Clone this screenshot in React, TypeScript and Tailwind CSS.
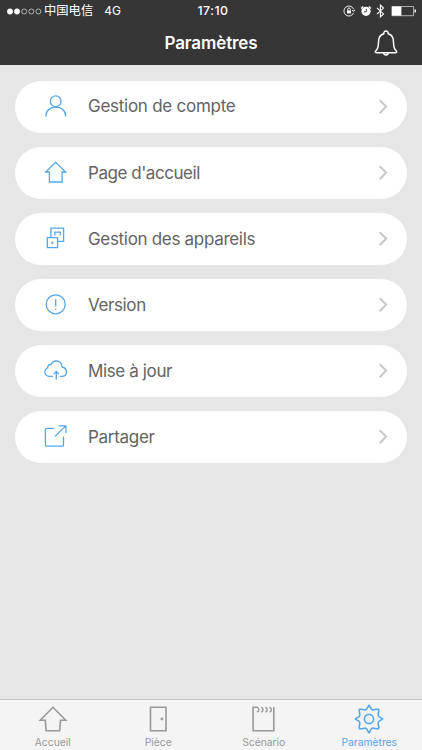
import { useState } from 'react'
import type { ReactNode } from 'react'

type Tab = 'home' | 'room' | 'scene' | 'settings'

const ROWS: { label: string; tracking: string; icon: ReactNode }[] = [
  {
    label: 'Gestion de compte',
    tracking: 'tracking-[-0.26px]',
    icon: (
      <>
        <circle cx="11.7" cy="6.3" r="5.4" />
        <path d="M2 21.5v-1c0-5 4.2-8.3 9.7-8.3s9.9 3.3 9.9 8.3v1" />
      </>
    ),
  },
  {
    label: "Page d'accueil",
    tracking: 'tracking-[-0.45px]',
    icon: <path d="M11.7 1.3 1.7 11h3.7v10h12.7V11h3.7z" />,
  },
  {
    label: 'Gestion des appareils',
    tracking: 'tracking-[-0.31px]',
    icon: (
      <>
        <path d="M6.9 10.5V1.100h12.700v13.200h-6" />
        <path d="M3.300 10.700h10.300v10H3.300zM10.800 8.600V5.200h5.500v3.400" />
        <circle cx="8.300" cy="15.700" r=".5" fill="currentColor" />
      </>
    ),
  },
  {
    label: 'Version',
    tracking: 'tracking-[-0.38px]',
    icon: (
      <>
        <circle cx="11.700" cy="11.300" r="9.500" />
        <path d="M11.700 6.200v7.200M11.700 15.700v1.300" />
      </>
    ),
  },
  {
    label: 'Mise à jour',
    tracking: 'tracking-[-0.37px]',
    icon: (
      <>
        <path d="M8.800 17.400H5.400C2.500 17.400.8 15.500.8 13.100c0-2.100 1.100-3.600 2.800-4.100-.2-2 1.400-3.700 3.500-3.500C8 3.300 9.800 2 12.200 2c3.500 0 6 2.500 5.900 6 2.700.5 4.300 2.300 4.300 4.900 0 2.700-1.800 4.500-4.600 4.500h-2" />
        <path d="M12.300 20.700v-8M9.700 15.100l2.600-2.600 2.600 2.600" />
      </>
    ),
  },
  {
    label: 'Partager',
    tracking: 'tracking-[-0.28px]',
    icon: (
      <>
        <path d="M9.800 3.400H2.700q-1.300 0-1.300 1.300v15.200q0 1.300 1.300 1.300h15.500q1.300 0 1.300-1.300v-8.300" />
        <path d="M10.900 11.400 21.900.9M14.600.9h7.300v7" />
      </>
    ),
  },
]

const TABS: { id: Tab; label: string; icon: ReactNode }[] = [
  { id: 'home', label: 'Accueil', icon: <path d="M15 3.300 2.300 16.200h5l.8 10.600h13.600l.8-10.600h5.200z" /> },
  {
    id: 'room',
    label: 'Pièce',
    icon: (
      <>
        <path d="M7.500 3.300h15.500v23.500H7.500z" />
        <circle cx="18.900" cy="15" r=".6" fill="currentColor" />
      </>
    ),
  },
  {
    id: 'scene',
    label: 'Scénario',
    icon: (
      <>
        <path d="M8.200 3.300H4.100v23.500h20.700V3" />
        <path d="M8 3.100q3.800 2.500 0 5.200M12.200 3.100q3.800 2.500 0 5.200M16.400 3.100q3.800 2.500 0 5.200M20.600 3.100q3.800 2.500 0 5.200" strokeWidth="1.400" />
      </>
    ),
  },
  {
    id: 'settings',
    label: 'Paramètres',
    icon: (
      <>
        <path d="M15 1.400c1.400 1.200 1.600 3.600 3.200 4.300s3.600-1 6.400-.3c.7 2.800-1 4.800-.3 6.400s3.100 1.800 4.300 3.200c-1.200 1.400-3.600 1.600-4.300 3.200s1 3.600.3 6.400c-2.800.7-4.800-1-6.400-.3s-1.800 3.100-3.200 4.300c-1.400-1.200-1.600-3.600-3.200-4.300s-3.600 1-6.400.3c-.7-2.800 1-4.800.3-6.400S2.600 16.400 1.400 15c1.200-1.400 3.600-1.600 4.300-3.200s-1-3.600-.3-6.400c2.800-.7 4.800 1 6.400.3s1.800-3.100 3.200-4.300z" />
        <circle cx="15" cy="15" r="4.600" />
      </>
    ),
  },
]

function StatusBar() {
  return (
    <div className="flex h-[22px] items-center pl-[7px] pr-[5px] text-[12px]">
      <div className="flex w-[155px] items-center">
        <svg className="h-[7px] w-[35px]" viewBox="0 0 35 7" fill="none" stroke="white" strokeWidth="0.6">
          <circle cx="3" cy="3.500" r="2.700" fill="white" />
          <circle cx="10" cy="3.500" r="2.700" fill="white" />
          <circle cx="17.200" cy="3.500" r="2.500" />
          <circle cx="24.300" cy="3.500" r="2.500" />
          <circle cx="31.400" cy="3.500" r="2.500" />
        </svg>
        <span className="ml-[2px] text-[12.300px]">中国电信</span>
        <span className="ml-[11px]">4G</span>
      </div>
      <span className="flex-1 pl-[2px] text-center text-[12.300px] font-medium tracking-[0.5px]">17:10</span>
      <div className="flex w-[155px] items-center justify-end">
        <svg className="h-3 w-3" viewBox="0 0 12 12" fill="none" stroke="white" strokeWidth="0.9">
          <path d="M10.500 4A5 5 0 1 0 10.600 7.800M9 5.300l2 1 .9-1.900" />
          <path d="M4.700 5.500V4.300a1.300 1.300 0 0 1 2.600 0v1.200" />
          <path d="M4 5.400h4v3H4z" fill="white" stroke="none" />
        </svg>
        <svg className="ml-[5px] h-3 w-3" viewBox="0 0 12 12" fill="none" stroke="white">
          <circle cx="6" cy="6.300" r="4.600" fill="white" stroke="none" />
          <path d="M1.200 3.500l2-2M10.800 3.500l-2-2" strokeWidth="1.700" />
          <path d="M6.300 3.800v3H4" stroke="#363636" strokeWidth="0.900" />
        </svg>
        <svg className="ml-[4px] h-[14px] w-[9px]" viewBox="0 0 9 14" fill="none" stroke="white" strokeWidth="1.100">
          <path d="M1 3.800l6.500 6.100-3.100 3V1.100l3.100 3L1 10.200" />
        </svg>
        <svg className="ml-[6px] h-[11px] w-[26px]" viewBox="0 0 26 11" fill="none" stroke="white">
          <path d="M.9.500h21.700v9.200H.9z" strokeWidth="0.600" />
          <path d="M1 .6h9.400v9H1z" fill="white" stroke="none" />
          <path d="M24.200 3.600v3" strokeWidth="1.400" />
        </svg>
      </div>
    </div>
  )
}

export default function App() {
  const [tab, setTab] = useState<Tab>('settings')

  return (
    <div className="flex h-[750px] w-[422px] flex-col bg-[#e6e6e6] font-['Inter','Noto_Sans_CJK_SC',sans-serif]">
      <header className="h-[65.300px] shrink-0 bg-[#363636] text-white">
        <StatusBar />
        <div className="grid h-[43px] grid-cols-[1fr_auto_1fr] items-center">
          <h1 className="col-start-2 text-[17px] font-semibold leading-none tracking-[-0.1px]">Paramètres</h1>
          <button className="mr-[23px] justify-self-end" aria-label="Notifications">
            <svg className="h-[28px] w-[26px]" viewBox="0 0 26 28" fill="none" stroke="white" strokeWidth="1.500" strokeLinejoin="round">
              <path d="M10.900 3.800C10.500 2.300 11.500 1.100 13 1.100s2.500 1.200 2.100 2.700c3.600.9 5.400 3.900 5.400 8 0 5.500.9 7.900 2.900 9.200.8.600.3 1.700-.6 1.700H3.200c-.9 0-1.400-1.100-.6-1.700 2-1.300 2.900-3.700 2.900-9.200 0-4.100 1.800-7.100 5.400-8z" />
              <path d="M10.800 22.800c0 1.400.8 2.200 2.200 2.200s2.200-.8 2.200-2.200" />
            </svg>
          </button>
        </div>
      </header>

      <main className="flex flex-1 flex-col gap-[14.150px] px-[15.400px] pt-[15.400px]">
        {ROWS.map(r => (
          <button key={r.label} className="flex h-[52px] items-center rounded-full bg-white pl-[28.600px] pr-[18.600px] text-left">
            <svg className="h-6 w-6 shrink-0 text-[#55a6ea]" viewBox="0 0 24 24" fill="none" stroke="currentColor" strokeWidth="1.300">
              {r.icon}
            </svg>
            <span className={`ml-5 flex-1 pb-[0.400px] text-[17px] leading-6 text-[#636363] ${r.tracking}`}>{r.label}</span>
            <svg className="h-4 w-[10px]" viewBox="0 0 10 16" fill="none" stroke="#c7c7c7" strokeWidth="2">
              <path d="M1.700 1.200 8.100 7.600l-6.400 6.600" />
            </svg>
          </button>
        ))}
      </main>

      <nav className="grid h-[51px] shrink-0 grid-cols-4 border-t border-[#c6c6c6] bg-[#f4f4f4]">
        {TABS.map(t => (
          <button
            key={t.id}
            onClick={() => setTab(t.id)}
            className={`flex flex-col items-center pt-1 ${tab === t.id ? 'text-[#55a6ea]' : 'text-[#999999]'}`}
          >
            <svg className="h-[30px] w-[30px]" viewBox="0 0 30 30" fill="none" stroke="currentColor" strokeWidth="1.600">
              {t.icon}
            </svg>
            <span className="mt-[2px] text-[10.300px] leading-3">{t.label}</span>
          </button>
        ))}
      </nav>
    </div>
  )
}
